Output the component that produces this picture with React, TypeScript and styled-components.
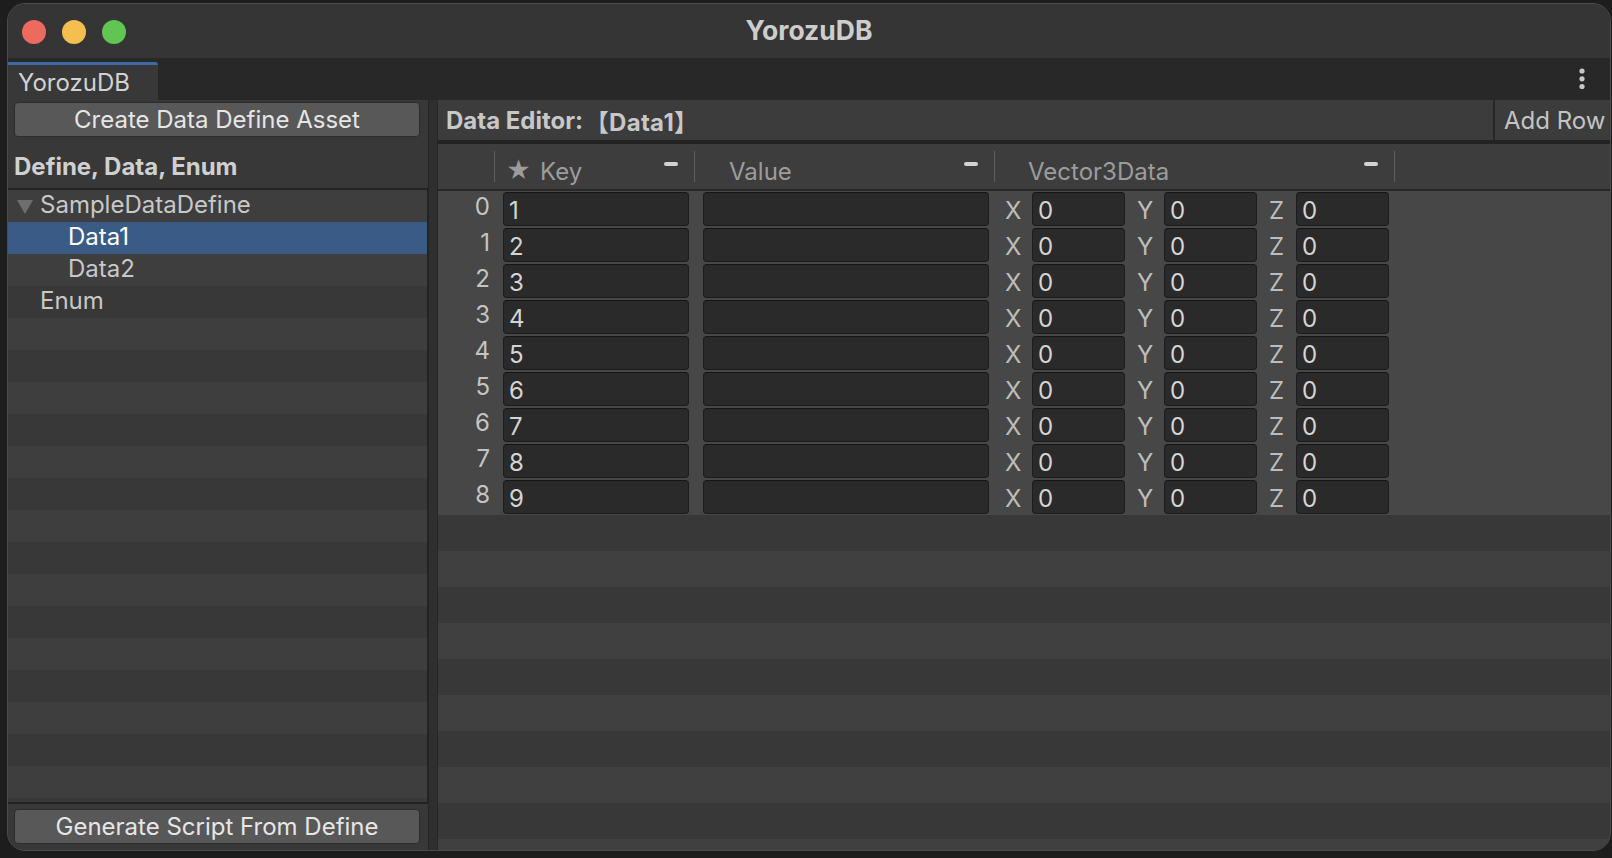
import React from "react";
import styled, { createGlobalStyle } from "styled-components";

const GlobalStyle = createGlobalStyle`
  html, body { margin: 0; padding: 0; background: #1d1d1d; }
  body { font-family: Inter, "Noto Sans CJK JP", "Noto Sans", sans-serif; }
  * { box-sizing: border-box; }
`;

const FONT = 24;

const Desktop = styled.div`
  width: 1612px;
  height: 858px;
  padding: 3px 1px 7px 7px;
  background: #1d1d1d;
  display: flex;
`;

const Window = styled.div`
  flex: 1;
  display: flex;
  flex-direction: column;
  border: 1px solid #4b4b4b;
  border-radius: 18px;
  overflow: hidden;
  background: #383838;
`;

const TitleBar = styled.div`
  height: 54px;
  flex: none;
  background: #353535;
  display: grid;
  grid-template-columns: 1fr auto 1fr;
  align-items: center;
`;

const Lights = styled.div`
  display: flex;
  gap: 16px;
  padding-left: 14px;
  padding-top: 1px;
`;

const Light = styled.span<{ $c: string }>`
  width: 24px;
  height: 24px;
  border-radius: 50%;
  background: ${(p) => p.$c};
`;

const Title = styled.div`
  font-weight: 700;
  font-size: 26.5px;
  color: #cdcdcd;
  padding-bottom: 3px;
`;

const TabBar = styled.div`
  height: 42px;
  flex: none;
  background: #282828;
  display: flex;
  align-items: flex-end;
  justify-content: space-between;
`;

const Tab = styled.div`
  width: 150px;
  height: 38px;
  background: #383838;
  border-top: 3px solid #3e6aa3;
  border-top-right-radius: 3px;
  color: #d2d2d2;
  font-size: ${FONT}px;
  display: flex;
  align-items: center;
  padding-left: 10px;
`;

const Kebab = styled.div`
  height: 42px;
  display: flex;
  align-items: center;
  padding-right: 25px;
`;

const Body = styled.div`
  flex: 1;
  display: flex;
  min-height: 0;
`;

const LeftPanel = styled.div`
  width: 420px;
  flex: none;
  display: flex;
  flex-direction: column;
  background: #383838;
`;

const Button = styled.div<{ $mt: number; $mb: number }>`
  height: 35px;
  flex: none;
  margin: ${(p) => p.$mt}px 8px ${(p) => p.$mb}px 6px;
  background: #585858;
  border: 1px solid #2c2c2c;
  border-radius: 4px;
  color: #e6e6e6;
  font-size: ${FONT}px;
  display: flex;
  align-items: center;
  justify-content: center;
`;

const SectionLabel = styled.div`
  height: 51px;
  flex: none;
  display: flex;
  align-items: center;
  padding: 7px 0 0 6px;
  font-weight: 700;
  font-size: ${FONT}px;
  color: #d0d0d0;
`;

const TreeList = styled.div`
  flex: 1;
  border-top: 2px solid #232323;
  border-bottom: 2px solid #232323;
  border-right: 1px solid #222222;
  background: repeating-linear-gradient(
    to bottom,
    #3e3e3e 0px,
    #3e3e3e 32px,
    #383838 32px,
    #383838 64px
  );
`;

const TreeRow = styled.div<{ $indent: number; $selected?: boolean }>`
  height: 32px;
  display: flex;
  align-items: center;
  padding-left: ${(p) => p.$indent}px;
  padding-bottom: 3px;
  background: ${(p) => (p.$selected ? "#395b86" : "transparent")};
  color: ${(p) => (p.$selected ? "#ffffff" : "#c8c8c8")};
  font-size: ${FONT}px;
`;

const Fold = styled.span`
  width: 23px;
  display: flex;
  align-items: center;
  padding-top: 4px;
`;

const Splitter = styled.div`
  width: 10px;
  flex: none;
  background: #2f2f2f;
  border-left: 1px solid #242424;
  border-right: 1px solid #262626;
`;

const RightPanel = styled.div`
  flex: 1;
  display: flex;
  flex-direction: column;
  min-width: 0;
`;

const EditorHeader = styled.div`
  height: 44px;
  flex: none;
  background: #3c3c3c;
  border-bottom: 4px solid #232323;
  display: flex;
  align-items: stretch;
  justify-content: space-between;
`;

const EditorTitle = styled.div`
  display: flex;
  align-items: center;
  padding-left: 8px;
  font-weight: 700;
  font-size: ${FONT}px;
  color: #c8c8c8;
`;

const Bracketed = styled.span`
  margin-left: -4px;
  letter-spacing: 0.3px;
`;

const AddRow = styled.div`
  width: 117px;
  border-left: 2px solid #262626;
  display: flex;
  align-items: center;
  padding-left: 9px;
  font-size: ${FONT}px;
  color: #c4c4c4;
`;

const COLS = "57px 200px 300px 400px 1fr";

const ColumnHeader = styled.div`
  height: 47px;
  flex: none;
  background: #3d3d3d;
  border-bottom: 2px solid #272727;
  display: grid;
  grid-template-columns: ${COLS};
`;

const HeaderCell = styled.div<{ $pad: number }>`
  display: flex;
  align-items: center;
  justify-content: flex-end;
  padding-left: ${(p) => p.$pad}px;
  color: #9c9c9c;
  font-size: ${FONT}px;
  &::after {
    content: "";
    width: 1px;
    height: 31px;
    background: #5f5f5f;
    flex: none;
  }
`;

const HeaderLabel = styled.span`
  padding-top: 9px;
  display: flex;
  align-items: center;
  gap: 9px;
  margin-right: auto;
`;

const Star = styled.span`
  font-size: 24px;
  padding-bottom: 2px;
`;

const Dash = styled.span`
  width: 14px;
  height: 4px;
  border-radius: 2px;
  background: #d2d2d2;
  margin-right: 16px;
  margin-bottom: 5px;
  flex: none;
`;

const Table = styled.div`
  flex: 1;
  display: flex;
  flex-direction: column;
  min-height: 0;
`;

const Rows = styled.div`
  background: #474747;
  flex: none;
`;

const Row = styled.div`
  height: 36px;
  display: grid;
  grid-template-columns: ${COLS};
  align-items: center;
`;

const IndexCell = styled.div`
  text-align: right;
  padding: 0 5px 5px 0;
  color: #c4c4c4;
  font-size: ${FONT}px;
`;

const FieldCell = styled.div`
  padding: 0 6px 0 8px;
  display: flex;
  align-items: center;
`;

const Field = styled.div<{ $w?: number }>`
  height: 34px;
  ${(p) => (p.$w ? `width: ${p.$w}px; flex: none;` : "flex: 1;")}
  background: #2a2a2a;
  border: 1px solid #1c1c1c;
  border-top-color: #141414;
  border-radius: 4px;
  color: #d4d4d4;
  font-size: ${FONT}px;
  display: flex;
  align-items: center;
  padding: 3px 0 0 5px;
`;

const VecCell = styled.div`
  display: flex;
  align-items: center;
  padding-left: 10px;
  gap: 12px;
`;

const VecGroup = styled.div`
  display: flex;
  align-items: center;
`;

const Axis = styled.span`
  width: 27px;
  color: #bdbdbd;
  font-size: ${FONT}px;
  padding-top: 2px;
`;

const Stripes = styled.div`
  flex: 1;
  background: repeating-linear-gradient(
    to bottom,
    #383838 0px,
    #383838 36px,
    #404040 36px,
    #404040 72px
  );
`;

const rows = Array.from({ length: 9 }, (_, i) => i);

export default function App() {
  return (
    <>
      <GlobalStyle />
      <Desktop>
        <Window>
          <TitleBar>
            <Lights>
              <Light $c="#ed6a5e" />
              <Light $c="#f5bf4f" />
              <Light $c="#61c554" />
            </Lights>
            <Title>YorozuDB</Title>
            <div />
          </TitleBar>
          <TabBar>
            <Tab>YorozuDB</Tab>
            <Kebab>
              <svg width="6" height="22" viewBox="0 0 6 22">
                <circle cx="3" cy="3" r="2.6" fill="#c8c8c8" />
                <circle cx="3" cy="10.8" r="2.6" fill="#c8c8c8" />
                <circle cx="3" cy="18.5" r="2.6" fill="#c8c8c8" />
              </svg>
            </Kebab>
          </TabBar>
          <Body>
            <LeftPanel>
              <Button $mt={2} $mb={0}>Create Data Define Asset</Button>
              <SectionLabel>Define, Data, Enum</SectionLabel>
              <TreeList>
                <TreeRow $indent={9}>
                  <Fold>
                    <svg width="16" height="14" viewBox="0 0 16 14">
                      <polygon points="0,0 16,0 8,14" fill="#6e6e6e" />
                    </svg>
                  </Fold>
                  SampleDataDefine
                </TreeRow>
                <TreeRow $indent={60} $selected>Data1</TreeRow>
                <TreeRow $indent={60}>Data2</TreeRow>
                <TreeRow $indent={32}>Enum</TreeRow>
              </TreeList>
              <Button $mt={5} $mb={6}>Generate Script From Define</Button>
            </LeftPanel>
            <Splitter />
            <RightPanel>
              <EditorHeader>
                <EditorTitle>
                  Data Editor:&nbsp;<Bracketed>【Data1】</Bracketed>
                </EditorTitle>
                <AddRow>Add Row</AddRow>
              </EditorHeader>
              <ColumnHeader>
                <HeaderCell $pad={0} />
                <HeaderCell $pad={11}>
                  <HeaderLabel>
                    <Star>★</Star>Key
                  </HeaderLabel>
                  <Dash />
                </HeaderCell>
                <HeaderCell $pad={34}>
                  <HeaderLabel>Value</HeaderLabel>
                  <Dash />
                </HeaderCell>
                <HeaderCell $pad={33}>
                  <HeaderLabel>Vector3Data</HeaderLabel>
                  <Dash />
                </HeaderCell>
              </ColumnHeader>
              <Table>
                <Rows>
                  {rows.map((i) => (
                    <Row key={i}>
                      <IndexCell>{i}</IndexCell>
                      <FieldCell>
                        <Field>{i + 1}</Field>
                      </FieldCell>
                      <FieldCell>
                        <Field />
                      </FieldCell>
                      <VecCell>
                        {["X", "Y", "Z"].map((a) => (
                          <VecGroup key={a}>
                            <Axis>{a}</Axis>
                            <Field $w={93}>0</Field>
                          </VecGroup>
                        ))}
                      </VecCell>
                    </Row>
                  ))}
                </Rows>
                <Stripes />
              </Table>
            </RightPanel>
          </Body>
        </Window>
      </Desktop>
    </>
  );
}
